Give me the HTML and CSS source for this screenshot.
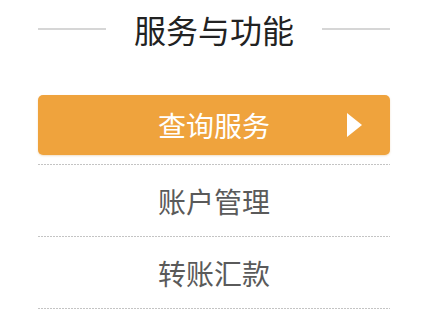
FILE: index.html
```html
<!DOCTYPE html>
<html lang="zh-CN">
<head>
  <meta charset="UTF-8">
  <title>服务与功能</title>
  <link rel="stylesheet" href="styles.css">
</head>
<body>
  <div class="panel">
    <div class="title">
      <span class="title-line"></span>
      <h2>服务与功能</h2>
      <span class="title-line"></span>
    </div>
    <ul class="menu">
      <li class="menu-item active">
        <span class="label">查询服务</span>
        <span class="arrow"></span>
      </li>
      <li class="menu-item"><span class="label">账户管理</span></li>
      <li class="menu-item"><span class="label">转账汇款</span></li>
    </ul>
  </div>
</body>
</html>
```

FILE: styles.css
```css
body {
  margin: 0;
  padding: 0;
  background: #fff;
  font-family: "Noto Sans CJK SC", "Noto Sans", sans-serif;
}
.panel {
  width: 352px;
  margin: 0 0 0 38px;
  padding-top: 9px;
}
.title {
  display: flex;
  align-items: center;
  justify-content: space-between;
  height: 40px;
}
.title-line {
  width: 68px;
  height: 2px;
  background: #d6d6d6;
}
.title h2 {
  margin: 0;
  font-size: 32px;
  font-weight: normal;
  line-height: 40px;
  color: #222;
}
.menu {
  list-style: none;
  margin: 46px 0 0;
  padding: 0;
}
.menu-item {
  position: relative;
  height: 72px;
  display: flex;
  align-items: center;
  justify-content: center;
  font-size: 28px;
  color: #5a5a5a;
  background-image: linear-gradient(to right, #c4c4c4 2px, transparent 2px);
  background-size: 3px 1px;
  background-repeat: repeat-x;
  background-position: left bottom;
}
.menu-item.active {
  height: 60px;
  margin-bottom: 10px;
  background: #efa33d;
  border-radius: 5px;
  color: #fff;
  box-shadow: 0 1px 2px rgba(200, 130, 40, 0.25);
}
.menu-item.active::after {
  content: "";
  position: absolute;
  left: 0;
  right: 0;
  bottom: -10px;
  height: 1px;
  background-image: linear-gradient(to right, #c4c4c4 2px, transparent 2px);
  background-size: 3px 1px;
}
.arrow {
  position: absolute;
  right: 28px;
  top: 18px;
  width: 0;
  height: 0;
  border-top: 12px solid transparent;
  border-bottom: 12px solid transparent;
  border-left: 15px solid #fff;
}
```
